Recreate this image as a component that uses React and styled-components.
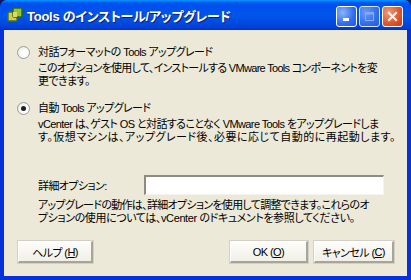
import React from "react";
import styled, { createGlobalStyle } from "styled-components";

const Global = createGlobalStyle`
  html, body { margin: 0; padding: 0; background: #0a1a5c; }
  body { width: 411px; height: 280px; overflow: hidden; }
`;

const FONT = `"Liberation Sans", "Noto Sans CJK JP", sans-serif`;

const Window = styled.div`
  width: 411px;
  height: 280px;
  display: flex;
  flex-direction: column;
  border-radius: 7px 7px 0 0;
  overflow: hidden;
  background: #0831d9;
  font-family: ${FONT};
`;

const TitleBar = styled.div`
  height: 30px;
  flex: none;
  display: flex;
  align-items: center;
  padding: 0 8px 0 7px;
  background: linear-gradient(
    to bottom,
    #0997ff 0px,
    #0053ee 3px,
    #0050ee 8px,
    #0055ea 16px,
    #0048dd 24px,
    #003dd7 28px,
    #0030c8 30px
  );
`;

const TitleText = styled.div`
  flex: 1;
  margin-left: 4px;
  color: #fff;
  font-weight: bold;
  font-size: 13px;
  letter-spacing: -0.25px;
  font-feature-settings: "palt";
  text-shadow: 1px 1px 0 #0f1d6e;
  white-space: nowrap;
`;

const CtrlGroup = styled.div`
  display: flex;
  gap: 2px;
  margin-top: 3px;
`;

const CtrlButton = styled.div`
  width: 21px;
  height: 21px;
  box-sizing: border-box;
  border: 1px solid #fff;
  border-radius: 3px;
  display: flex;
  align-items: center;
  justify-content: center;
  background: ${(p) =>
    p.$close
      ? "radial-gradient(circle at 30% 30%, #f09a7a, #e0542a 60%, #c23b16)"
      : p.$disabled
      ? "radial-gradient(circle at 30% 30%, #7fa8f8, #3a74ec 60%, #2b60e0)"
      : "radial-gradient(circle at 30% 30%, #8ab4ff, #2f6cf2 60%, #1e55e0)"};
  opacity: ${(p) => (p.$disabled ? 0.85 : 1)};
`;

const Client = styled.div`
  flex: 1;
  margin: 0 4px 4px 4px;
  background: #ece9d8;
  display: flex;
  flex-direction: column;
  padding: 16px 13px 13px 13px;
  font-size: 11px;
  letter-spacing: -0.6px;
  color: #000;
  font-feature-settings: "palt";
  white-space: nowrap;
`;

const OptionRow = styled.div`
  display: flex;
  align-items: center;
  height: 13px;
  line-height: 13px;
  margin-top: ${(p) => p.$mt || 0}px;
`;

const Radio = styled.div`
  width: 13px;
  height: 13px;
  box-sizing: border-box;
  border-radius: 50%;
  border: 1px solid #9c9c9c;
  background: radial-gradient(circle at 65% 65%, #ffffff 30%, #e2e2dc 100%);
  display: flex;
  align-items: center;
  justify-content: center;
  margin-right: 8px;
  flex: none;
`;

const Dot = styled.div`
  width: 5px;
  height: 5px;
  border-radius: 50%;
  background: #202020;
`;

const Desc = styled.div`
  margin: ${(p) => p.$mt || 3}px 0 0 21px;
  line-height: 13px;
`;

const DescLine = styled.div`
  letter-spacing: ${(p) => (p.$ls == null ? -0.6 : p.$ls)}px;
`;

const DetailRow = styled.div`
  display: flex;
  align-items: center;
  margin: 31px 10px 0 21px;
`;

const DetailLabel = styled.div`
  width: 106px;
  flex: none;
`;

const TextBox = styled.div`
  flex: 1;
  height: 20px;
  box-sizing: border-box;
  background: #fff;
  border-top: 2px solid #8d8b82;
  border-left: 2px solid #8d8b82;
  border-right: 1px solid #f4f3ee;
  border-bottom: 1px solid #f4f3ee;
`;

const Spacer = styled.div`
  flex: 1;
`;

const ButtonRow = styled.div`
  display: flex;
  align-items: center;
  gap: 6px;
  padding-left: 1px;
`;

const Button = styled.div`
  width: ${(p) => p.$w || 75}px;
  height: 22px;
  box-sizing: border-box;
  display: flex;
  align-items: center;
  justify-content: center;
  background: linear-gradient(#fdfdfb, #f1efe6);
  border-top: 1px solid #ffffff;
  border-left: 1px solid #ffffff;
  border-right: 2px solid #a7a597;
  border-bottom: 2px solid #a7a597;
  box-shadow: 0 0 0 1px #d4d0c8;
  color: #000;
`;

const U = styled.span`
  text-decoration: underline;
`;

const AppIcon = () => (
  <svg width="16" height="16" viewBox="0 0 16 16">
    <rect x="1" y="5" width="9" height="9" rx="1" fill="#d9c84a" stroke="#3b7a1a" strokeWidth="1.5" />
    <rect x="6" y="1" width="9" height="9" rx="1" fill="#8fc43c" stroke="#2f6b12" strokeWidth="1.5" />
    <rect x="6" y="5" width="4" height="5" fill="#e6d85a" />
  </svg>
);

export default function App() {
  return (
    <>
      <Global />
      <Window>
        <TitleBar>
          <AppIcon />
          <TitleText>Tools のインストール/アップグレード</TitleText>
          <CtrlGroup>
            <CtrlButton>
              <svg width="11" height="11" viewBox="0 0 11 11">
                <rect x="2" y="7" width="6" height="3" fill="#fff" />
              </svg>
            </CtrlButton>
            <CtrlButton $disabled>
              <svg width="11" height="11" viewBox="0 0 11 11">
                <rect x="1.5" y="1.5" width="8" height="8" fill="none" stroke="#9dbaf5" strokeWidth="1" />
                <rect x="1.5" y="1.5" width="8" height="2" fill="#9dbaf5" />
              </svg>
            </CtrlButton>
            <CtrlButton $close>
              <svg width="11" height="11" viewBox="0 0 11 11">
                <path d="M2 2 L9 9 M9 2 L2 9" stroke="#fff" strokeWidth="2" strokeLinecap="square" />
              </svg>
            </CtrlButton>
          </CtrlGroup>
        </TitleBar>
        <Client>
          <OptionRow>
            <Radio />
            <span>対話フォーマットの Tools アップグレード</span>
          </OptionRow>
          <Desc>
            <DescLine $ls={-0.7}>このオプションを使用して、インストールする VMware Tools コンポーネントを変</DescLine>
            <DescLine>更できます。</DescLine>
          </Desc>
          <OptionRow $mt={14}>
            <Radio>
              <Dot />
            </Radio>
            <span>自動 Tools アップグレード</span>
          </OptionRow>
          <Desc>
            <DescLine>vCenter は、ゲスト OS と対話することなく VMware Tools をアップグレードしま</DescLine>
            <DescLine $ls={0.48}>す。仮想マシンは、アップグレード後、必要に応じて自動的に再起動します。</DescLine>
          </Desc>
          <DetailRow>
            <DetailLabel>詳細オプション:</DetailLabel>
            <TextBox />
          </DetailRow>
          <Desc $mt={4}>
            <DescLine $ls={-0.7}>アップグレードの動作は、詳細オプションを使用して調整できます。これらのオ</DescLine>
            <DescLine $ls={-0.4}>プションの使用については、vCenter のドキュメントを参照してください。</DescLine>
          </Desc>
          <Spacer />
          <ButtonRow>
            <Button $w={75}>
              ヘルプ (<U>H</U>)
            </Button>
            <Spacer />
            <Button $w={78}>
              OK (<U>O</U>)
            </Button>
            <Button $w={80}>
              キャンセル (<U>C</U>)
            </Button>
          </ButtonRow>
        </Client>
      </Window>
    </>
  );
}
